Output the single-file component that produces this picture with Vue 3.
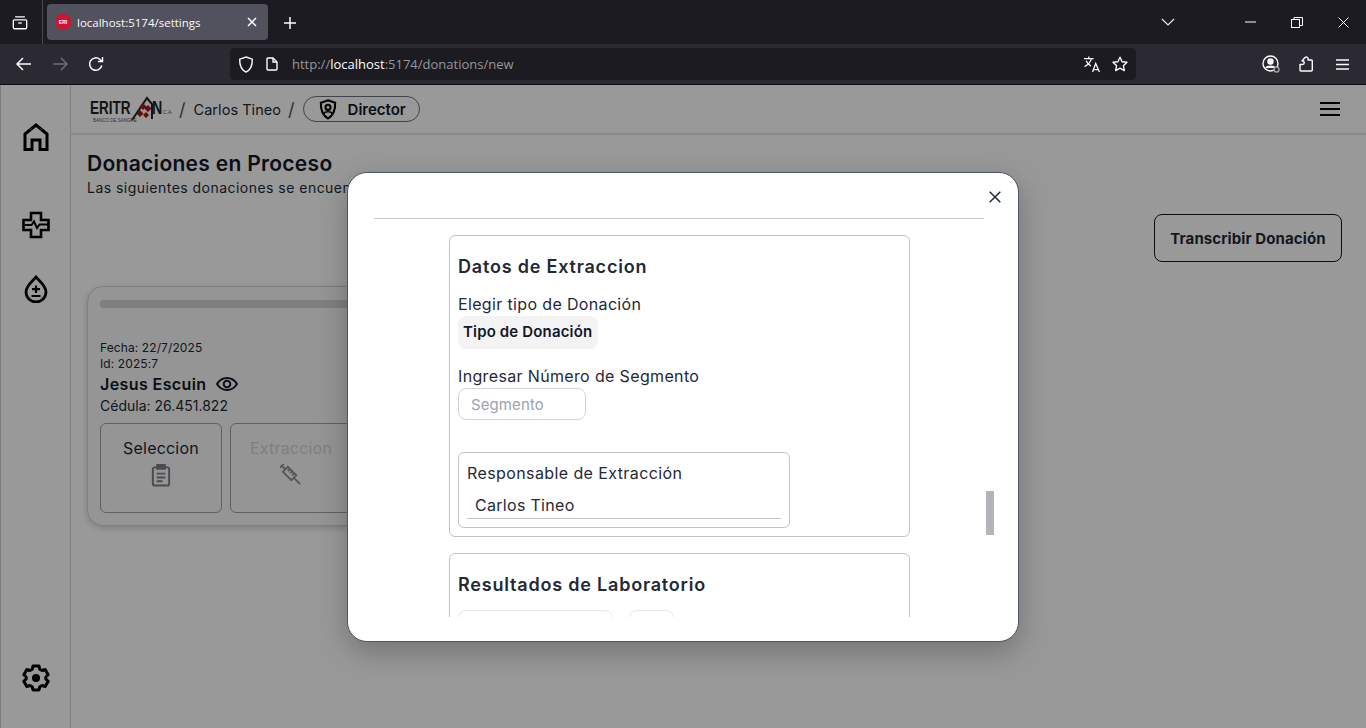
<script setup>
const steps = [{ label: 'Seleccion', off: false }, { label: 'Extraccion', off: true }]
</script>

<template>
  <div class="window">
    <div class="tabbar">
      <button class="tb tabs-btn">
        <svg width="16" height="16" viewBox="0 0 18 16" fill="none" stroke="#fbfbfe" stroke-width="1.500"><path d="M3.500 1.200h11M2.500 4.500h13a1 1 0 0 1 1 1v7.500a1.500 1.500 0 0 1-1.500 1.500h-12A1.500 1.500 0 0 1 1.500 13V5.500a1 1 0 0 1 1-1z"/><path d="M7 8h4"/></svg>
      </button>
      <div class="tab">
        <span class="favicon">ERI</span>
        <span class="tab-title">localhost:5174/settings</span>
        <svg class="tab-x" width="10" height="10" viewBox="0 0 10 10" stroke="#fbfbfe" stroke-width="1.500"><path d="M1 1l8 8M9 1l-8 8"/></svg>
      </div>
      <svg class="plus" width="14" height="14" viewBox="0 0 14 14" stroke="#fbfbfe" stroke-width="1.500"><path d="M7 1v12M1 7h12"/></svg>
      <div class="spacer"></div>
      <svg class="chev" width="14" height="8" viewBox="0 0 14 8" fill="none" stroke="#e8e8ea" stroke-width="1.200"><path d="M1 1l6 6 6-6"/></svg>
      <svg class="win-min" width="11" height="2" viewBox="0 0 11 2" stroke="#fff"><path d="M0 1h11"/></svg>
      <svg class="win-res" width="12" height="11" viewBox="0 0 12 11" fill="none" stroke="#fff"><rect x=".5" y="2.500" width="8" height="8"/><path d="M3 2.500V.5h8.500v8H8.500"/></svg>
      <svg class="win-x" width="11" height="11" viewBox="0 0 11 11" stroke="#fff"><path d="M.5.5l10 10M10.500.5l-10 10"/></svg>
    </div>

    <div class="toolbar">
      <svg class="t-back" width="16" height="14" viewBox="0 0 16 14" fill="none" stroke="#fbfbfe" stroke-width="1.500"><path d="M15 7H1.500M7 1L1 7l6 6"/></svg>
      <svg class="t-fwd" width="16" height="14" viewBox="0 0 16 14" fill="none" stroke="#6f6e76" stroke-width="1.500"><path d="M1 7h13.500M9 1l6 6-6 6"/></svg>
      <svg class="t-rel" width="16" height="16" viewBox="0 0 16 16" fill="none" stroke="#fbfbfe" stroke-width="1.500"><path d="M13.800 9.500A6.200 6.200 0 1 1 12 3.500L14.500 5.500M14.500 1v4.500H10"/></svg>
      <div class="urlbar">
        <svg width="16" height="17" viewBox="0 0 16 17" fill="none" stroke="#fbfbfe" stroke-width="1.400"><path d="M8 1l6.300 2.200c.2 6-1.500 10.500-6.300 12.800C3.200 13.700 1.500 9.200 1.700 3.200z"/></svg>
        <svg class="doc" width="12" height="14" viewBox="0 0 12 14" fill="none" stroke="#fbfbfe" stroke-width="1.400"><path d="M1 2a1 1 0 0 1 1-1h5l4 4v7a1 1 0 0 1-1 1H2a1 1 0 0 1-1-1z"/><path d="M7 1v4h4"/></svg>
        <span class="url"><i>http://</i><b>localhost</b><i>:5174/donations/new</i></span>
        <span class="spacer"></span>
        <svg class="translate" width="18" height="17" viewBox="0 0 17 16" fill="none" stroke="#fbfbfe" stroke-width="1.200"><path d="M1 2.500h9M5.500.5v2M8 2.500C7 6 4.500 8.500 1.500 10M3 4.500c1 2.500 2.500 4 4.500 5M9 15l3-8 3.500 8M10 12.800h4.600"/></svg>
        <svg class="star" width="16" height="16" viewBox="0 0 16 16" fill="none" stroke="#fbfbfe" stroke-width="1.400" stroke-linejoin="round"><path d="M8 1.200l2.100 4.500 4.900.6-3.600 3.400.9 4.900L8 12.200l-4.300 2.400.9-4.900L1 6.300l4.900-.6z"/></svg>
      </div>
      <svg class="t-prof" width="18" height="18" viewBox="0 0 18 18" fill="none" stroke="#fbfbfe" stroke-width="1.400"><circle cx="8.500" cy="8.500" r="7.500"/><circle cx="8.500" cy="6.500" r="2.500" fill="#fbfbfe"/><path d="M4 13c1-2.500 8-2.500 9 0" fill="#fbfbfe"/><circle cx="14.500" cy="14.500" r="2.500" fill="#2b2a33" stroke="#a0a0a6"/></svg>
      <svg class="t-ext" width="14" height="16" viewBox="0 0 14 16" fill="none" stroke="#fbfbfe" stroke-width="1.400" stroke-linejoin="round"><path d="M1 8.500h2.500a1.700 1.700 0 0 0 0-3.500H3l3-3.500a2 2 0 0 1 3 2.500H12.500a.8.800 0 0 1 .8.800V14a1 1 0 0 1-1 1H2a1 1 0 0 1-1-1z"/></svg>
      <svg class="t-menu" width="13" height="11" viewBox="0 0 13 11" stroke="#fbfbfe" stroke-width="1.300"><path d="M0 1h13M0 5.500h13M0 10h13"/></svg>
    </div>

    <div class="page">
      <aside class="sidebar">
        <svg class="s-home" width="26" height="28" viewBox="0 0 26 28" fill="none" stroke="#000" stroke-width="3"><path d="M2 26.500V11L13 2l11 9v15.500h-7V17H9v9.500z"/></svg>
        <svg class="s-med" width="28" height="28" viewBox="0 0 28 28" fill="none" stroke="#000" stroke-width="2.600"><path d="M9 2h10v7h7.500v10H19v7H9v-7H1.500V9H9z"/><path d="M2 14h7.500l2.500-3.500 3 6.500 2.500-3.500H26" stroke-width="2"/></svg>
        <svg class="s-drop" width="24" height="28" viewBox="0 0 24 28" fill="none" stroke="#000" stroke-width="2.800"><path d="M12 2c3 4 10 8.500 10 15a10 10 0 0 1-20 0C2 10.500 9 6 12 2z"/><path d="M12 10.500v7.500M8 14.200h8M7.500 21h9" stroke-width="2.200"/></svg>
        <span class="spacer"></span>
        <svg class="s-gear" width="28" height="28" viewBox="0 0 28 28" fill="none" stroke="#000" stroke-width="3" stroke-linejoin="round"><path d="M11 2h6l.8 3.300 2.200 1.200 3.200-1 3 5.200-2.400 2.300v2l2.400 2.300-3 5.200-3.200-1-2.200 1.200L17 26h-6l-.8-3.300L8 21.500l-3.200 1-3-5.200L4.200 15v-2L1.800 10.700l3-5.200 3.200 1 2.200-1.200z"/><circle cx="14" cy="14" r="4" fill="#000" stroke="none"/></svg>
      </aside>

      <main class="main">
        <header class="topbar">
          <div class="logo">
            <span class="logo-word">ERITR</span>
            <svg class="logo-mark" width="24" height="30" viewBox="0 0 24 30"><path d="M1 26L16 4l5 6v15" fill="none" stroke="#222" stroke-width="2"/><path d="M12 9l3.500 3.500L12 16l-3.500-3.500zM17 11l3.500 3.500L17 18l-3.500-3.500zM9 16l3.500 3.500L9 23l-3.500-3.500zM15 18l3 3-3 3-3-3z" fill="#a8141c"/></svg>
            <span class="logo-n">N</span>
            <span class="logo-ca">C.A.</span>
            <span class="logo-sub">BANCO DE SANGRE</span>
          </div>
          <span class="slash">/</span>
          <span class="user">Carlos Tineo</span>
          <span class="slash">/</span>
          <span class="role">
            <svg width="18" height="21" viewBox="0 0 17 20" fill="none" stroke="#000" stroke-width="2"><path d="M8.500 1.200l6.800 2.400c.3 7-1.500 11.800-6.800 15C3.200 15.400 1.400 10.600 1.700 3.600z"/><circle cx="8.500" cy="8" r="2.400"/><path d="M4.500 14c1-2.500 7-2.500 8 0" stroke-width="1.600"/></svg>
            Director
          </span>
          <span class="spacer"></span>
          <div class="burger"><i></i><i></i><i></i></div>
        </header>

        <section class="content">
          <h1>Donaciones en Proceso</h1>
          <p class="sub">Las siguientes donaciones se encuentran en proceso</p>
          <div class="actions"><button class="transcribe">Transcribir Donación</button></div>
          <article class="card">
            <div class="progress"></div>
            <div class="meta">Fecha: 22/7/2025</div>
            <div class="meta">Id: 2025:7</div>
            <div class="name">Jesus Escuin
              <svg width="22" height="14" viewBox="0 0 22 14" fill="none" stroke="#111827" stroke-width="2"><path d="M1 7c5-8 15-8 20 0-5 8-15 8-20 0z"/><circle cx="11" cy="7" r="3.300"/></svg>
            </div>
            <div class="ced">Cédula: 26.451.822</div>
            <div class="steps">
              <div v-for="s in steps" :key="s.label" class="step" :class="{ off: s.off }">
                <span>{{ s.label }}</span>
                <svg v-if="!s.off" width="20" height="23" viewBox="0 0 20 24" fill="none" stroke="#7b7f87" stroke-width="2"><rect x="1.500" y="3.500" width="17" height="19" rx="2"/><rect x="6" y="1" width="8" height="4" fill="#7b7f87"/><path d="M5.500 10h9M5.500 14h9M5.500 18h6"/></svg>
                <svg v-else width="22" height="22" viewBox="0 0 22 22" fill="none" stroke="#8c9098" stroke-width="1.800"><g transform="rotate(45 11 11)"><path d="M-2 8v6M-2 11h5"/><rect x="3" y="7.500" width="12" height="7"/><path d="M6 7.500v3M9 7.500v3M12 7.500v3M15 11h9"/></g></svg>
              </div>
            </div>
          </article>
        </section>
      </main>

      <div class="backdrop">
        <div class="modal">
          <div class="modal-head">
            <svg class="close" width="12" height="12" viewBox="0 0 12 12" stroke="#1f2937" stroke-width="1.500"><path d="M.7.7l10.600 10.600M11.300.7L.7 11.300"/></svg>
          </div>
          <div class="modal-body">
            <div class="thumb"></div>
            <section class="panel first">
              <h2>Datos de Extraccion</h2>
              <label class="lbl">Elegir tipo de Donación</label>
              <div class="select">Tipo de Donación</div>
              <label class="lbl second">Ingresar Número de Segmento</label>
              <input class="seg" placeholder="Segmento" />
              <div class="resp">
                <div class="resp-title">Responsable de Extracción</div>
                <div class="resp-value">Carlos Tineo</div>
              </div>
            </section>
            <section class="panel">
              <h2>Resultados de Laboratorio</h2>
              <div class="lab-row"><span class="lab-a"></span><span class="lab-b"></span></div>
            </section>
          </div>
        </div>
      </div>
    </div>
  </div>
</template>

<style>
html, body { margin: 0; height: 100%; overflow: hidden; }
</style>

<style scoped>
* { box-sizing: border-box; }
.window { width: 1366px; height: 728px; display: flex; flex-direction: column; font-family: Inter, "Noto Sans", sans-serif; color: #1f2937; overflow: hidden; }
.spacer { flex: 1; }
button { font: inherit; }

.tabbar { height: 44px; background: #1c1b22; display: flex; align-items: center; flex: none; }
.tb { width: 43px; height: 44px; background: none; border: 0; border-right: 1px solid #4a4953; padding: 1px 2px 0 0; display: flex; align-items: center; justify-content: center; margin-right: 4px; }
.tab { width: 221px; height: 36px; background: #52525e; border-radius: 4px; display: flex; align-items: center; padding: 0 11px 0 8px; }
.favicon { width: 16px; height: 16px; border-radius: 50%; background: #d3122f; color: #fff; font: 700 5px/16px "Liberation Sans", sans-serif; text-align: center; flex: none; }
.tab-title { font: 11.500px "Open Sans", sans-serif; color: #fbfbfe; margin-left: 6px; flex: 1; white-space: nowrap; }
.plus { margin-left: 15px; margin-top: 1px; }
.chev { margin-right: 70px; }
.win-min { margin-right: 35px; }
.win-res { margin-right: 35px; }
.win-x { margin-right: 17px; }

.toolbar { height: 41px; background: #2b2a33; border-bottom: 1px solid #0c0c0d; display: flex; align-items: center; flex: none; padding-left: 16px; }
.t-fwd { margin-left: 20px; }
.t-rel { margin-left: 20px; }
.urlbar { width: 906px; height: 32px; margin-left: 126px; background: #1c1b22; border-radius: 4px; display: flex; align-items: center; padding: 0 8px; }
.doc { margin-left: 12px; }
.url { font: 13px "Open Sans", sans-serif; margin-left: 14px; white-space: nowrap; }
.url i { font-style: normal; color: #96969b; }
.url b { font-weight: 400; color: #fbfbfe; }
.translate { margin-right: 11px; }
.t-prof { margin-left: 126px; }
.t-ext { margin-left: 19px; }
.t-menu { margin-left: 23px; }

.page { flex: 1; display: flex; position: relative; background: #fff; min-height: 0; }
.sidebar { width: 71px; flex: none; border-right: 1px solid #d1d5db; border-left: 1px solid #d1d5db; display: flex; flex-direction: column; align-items: center; padding: 38px 0 36px; }
.s-med { margin-top: 60px; }
.s-drop { margin-top: 36px; }

.main { flex: 1; min-width: 0; display: flex; flex-direction: column; }
.topbar { height: 50px; border-bottom: 2px solid #e5e7eb; display: flex; align-items: center; padding: 0 26px 0 19px; flex: none; }
.logo { width: 81px; height: 30px; position: relative; margin-right: 8px; }
.logo-word { position: absolute; left: 0; top: 2px; font: 700 19px/24px "Liberation Sans", sans-serif; color: #222; transform: scaleX(.71); transform-origin: left; }
.logo-mark { position: absolute; left: 41px; top: 0; }
.logo-n { position: absolute; left: 62px; top: 2px; font: 700 19px/24px "Liberation Sans", sans-serif; color: #222; transform: scaleX(.75); transform-origin: left; }
.logo-ca { position: absolute; left: 73px; top: 15px; font: 5px/7px "Liberation Sans", sans-serif; color: #555; }
.logo-sub { position: absolute; left: 3px; top: 24px; font: 4.500px/5px "Liberation Sans", sans-serif; color: #555; white-space: nowrap; }
.slash { font-size: 18px; color: #4b5563; }
.user { font-size: 14.500px; margin: 0 7px 0 8px; white-space: nowrap; letter-spacing: .05px; }
.role { margin-left: 8px; height: 26px; width: 117px; border: 1px solid #6b7280; border-radius: 13px; display: flex; align-items: center; padding-left: 15px; gap: 11px; font-size: 15px; font-weight: 600; color: #111827; }
.burger { width: 20px; display: flex; flex-direction: column; gap: 3.500px; }
.burger i { display: block; height: 2.500px; background: #000; }

.content { padding: 16px 24px 0 16px; flex: 1; min-height: 0; }
h1 { margin: 0; font-size: 21px; line-height: 25px; font-weight: 600; color: #111827; letter-spacing: .3px; white-space: nowrap; }
.sub { margin: 1px 0 0; font-size: 14px; line-height: 22px; white-space: nowrap; letter-spacing: .47px; }
.actions { display: flex; justify-content: flex-end; margin-top: 15px; }
.transcribe { width: 188px; height: 48px; background: #fff; border: 1px solid #111827; border-radius: 8px; font-size: 15px; font-weight: 700; letter-spacing: .1px; color: #1f2937; }
.card { width: 640px; height: 240px; margin-top: 24px; background: #f8f8f8; border: 1px solid #d1d5db; border-radius: 16px; padding: 13px 12px 12px; box-shadow: 0 2px 6px rgba(0,0,0,.18); }
.progress { height: 8px; border-radius: 4px; background: #d1d5db; margin-bottom: 32px; }
.meta { font-size: 12px; line-height: 15.500px; color: #1f2937; letter-spacing: .1px; }
.name { display: flex; align-items: center; gap: 9px; font-size: 16px; line-height: 22px; font-weight: 600; color: #111827; margin-top: 2px; letter-spacing: .4px; }
.ced { font-size: 14px; line-height: 22px; }
.steps { display: flex; gap: 8px; margin-top: 6px; }
.step { width: 122px; height: 90px; border: 1px solid #9ca3af; border-radius: 6px; display: flex; flex-direction: column; align-items: center; padding-top: 14px; gap: 6px; font-size: 16px; line-height: 20px; letter-spacing: .2px; color: #1f2937; }
.step.off { color: #d1d5db; }

.backdrop { position: absolute; inset: 0; background: rgba(0,0,0,.4); display: flex; padding: 87px 0 0 347px; }
.modal { width: 672px; height: 470px; background: #fff; border: 1px solid #4b5563; border-radius: 20px; display: flex; flex-direction: column; padding: 0 25px 24px 26px; box-shadow: 0 10px 30px rgba(0,0,0,.25); overflow: hidden; position: relative; }
.modal-head { height: 46px; border-bottom: 1px solid #c4c4c4; flex: none; margin-right: 9px; }
.close { position: absolute; top: 18px; right: 17px; }
.modal-body { flex: 1; min-height: 0; overflow: hidden; position: relative; padding: 16px 0 0 75px; margin-right: -1px; }
.thumb { position: absolute; right: 0; top: 272px; width: 8px; height: 44px; background: #b3b3b8; }
.panel { width: 461px; border: 1px solid #c4c4c4; border-radius: 6px; padding: 0 8px; }
.panel.first { height: 302px; margin-bottom: 16px; }
h2 { margin: 18px 0 12px; font-size: 18px; line-height: 26px; font-weight: 600; color: #1f2937; letter-spacing: .8px; white-space: nowrap; }
.lbl { display: block; font-size: 16px; line-height: 24px; letter-spacing: .35px; color: #1f2937; white-space: nowrap; }
.select { width: 140px; height: 33px; background: #f3f3f4; border-radius: 8px; font-size: 15px; font-weight: 600; line-height: 32px; padding-left: 5px; color: #111827; white-space: nowrap; letter-spacing: .15px; }
.lbl.second { margin-top: 15px; }
.seg { display: block; width: 128px; height: 32px; border: 1px solid #d1d5db; border-radius: 8px; padding: 0 12px; font: 15px Inter, sans-serif; outline: 0; background: #fff; letter-spacing: .1px; }
.seg::placeholder { color: #9ca3af; opacity: 1; }
.resp { width: 332px; height: 76px; margin-top: 32px; border: 1px solid #c4c4c4; border-radius: 6px; padding: 8px 8px 0; }
.resp-title { font-size: 16px; line-height: 24px; letter-spacing: .4px; white-space: nowrap; }
.resp-value { margin-top: 8px; height: 26px; padding-left: 8px; border-bottom: 1px solid #c4c4c4; font-size: 16px; line-height: 24px; letter-spacing: .3px; }
.panel:not(.first) h2 { margin-bottom: 0; }
.panel:not(.first) { height: 120px; }
.lab-row { display: flex; gap: 16px; margin-top: 12px; }
.lab-a, .lab-b { display: block; height: 30px; border: 1px solid #e5e7eb; border-radius: 8px; }
.lab-a { width: 155px; }
.lab-b { width: 45px; }
</style>
